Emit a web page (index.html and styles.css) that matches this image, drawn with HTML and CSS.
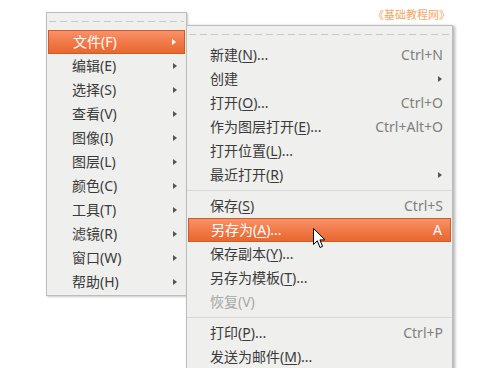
FILE: index.html
```html
<!DOCTYPE html>
<html lang="zh-CN">
<head>
<meta charset="utf-8">
<link rel="stylesheet" href="styles.css">
</head>
<body>
<div class="stage">
  <div class="watermark">《基础教程网》</div>

  <div class="menu menu-main">
    <div class="tearoff"><span class="dash"></span></div>
    <div class="item active"><span class="label">文件(F)</span><span class="arrow"></span></div>
    <div class="item"><span class="label">编辑(E)</span><span class="arrow"></span></div>
    <div class="item"><span class="label">选择(S)</span><span class="arrow"></span></div>
    <div class="item"><span class="label">查看(V)</span><span class="arrow"></span></div>
    <div class="item"><span class="label">图像(I)</span><span class="arrow"></span></div>
    <div class="item"><span class="label">图层(L)</span><span class="arrow"></span></div>
    <div class="item"><span class="label">颜色(C)</span><span class="arrow"></span></div>
    <div class="item"><span class="label">工具(T)</span><span class="arrow"></span></div>
    <div class="item"><span class="label">滤镜(R)</span><span class="arrow"></span></div>
    <div class="item"><span class="label">窗口(W)</span><span class="arrow"></span></div>
    <div class="item"><span class="label">帮助(H)</span><span class="arrow"></span></div>
  </div>

  <div class="menu menu-sub">
    <div class="tearoff"><span class="dash"></span></div>
    <div class="item"><span class="label">新建(<u>N</u>)...</span><span class="accel">Ctrl+N</span></div>
    <div class="item"><span class="label">创建</span><span class="arrow"></span></div>
    <div class="item"><span class="label">打开(<u>O</u>)...</span><span class="accel">Ctrl+O</span></div>
    <div class="item"><span class="label">作为图层打开(<u>E</u>)...</span><span class="accel">Ctrl+Alt+O</span></div>
    <div class="item"><span class="label">打开位置(<u>L</u>)...</span></div>
    <div class="item"><span class="label">最近打开(<u>R</u>)</span><span class="arrow"></span></div>
    <div class="sep"></div>
    <div class="item"><span class="label">保存(<u>S</u>)</span><span class="accel">Ctrl+S</span></div>
    <div class="item active"><span class="label">另存为(<u>A</u>)...</span><span class="accel">A</span></div>
    <div class="item"><span class="label">保存副本(<u>Y</u>)...</span></div>
    <div class="item"><span class="label">另存为模板(<u>T</u>)...</span></div>
    <div class="item disabled"><span class="label">恢复(V)</span></div>
    <div class="sep"></div>
    <div class="item"><span class="label">打印(<u>P</u>)...</span><span class="accel">Ctrl+P</span></div>
    <div class="item"><span class="label">发送为邮件(<u>M</u>)...</span></div>
  </div>

  <svg class="cursor" width="13" height="21" viewBox="0 0 13 21">
    <path d="M0.5 0.5 L0.5 16.5 L4.3 12.8 L7 19.5 L9.6 18.4 L6.9 11.9 L12 11.9 Z" fill="#fff" stroke="#000" stroke-width="1" stroke-linejoin="miter"/>
  </svg>
</div>
</body>
</html>
```

FILE: styles.css
```css
html, body {
  margin: 0;
  padding: 0;
  background: #ffffff;
}

.stage {
  position: relative;
  width: 482px;
  height: 368px;
  overflow: hidden;
  font-family: "Noto Sans", "Noto Sans CJK SC", sans-serif;
  font-size: 14px;
  color: #3a3a3a;
}

.watermark {
  position: absolute;
  left: 373px;
  top: 7px;
  font-size: 11px;
  line-height: 14px;
  color: #f6a567;
  font-family: "Noto Sans CJK SC", sans-serif;
  white-space: nowrap;
}

.menu {
  position: absolute;
  box-sizing: border-box;
  background: #efefed;
  border: 1px solid #bdbdbb;
  padding: 0 1px;
  display: flex;
  flex-direction: column;
}

.menu-main {
  left: 46px;
  top: 12px;
  width: 141px;
  height: 284px;
  box-shadow: 1px 1px 2px rgba(0, 0, 0, 0.22);
  z-index: 1;
}

.menu-sub {
  left: 186px;
  top: 25px;
  width: 267px;
  height: 360px;
  box-shadow: 2px 1px 3px rgba(0, 0, 0, 0.3);
  z-index: 2;
}

.tearoff {
  height: 17px;
  display: flex;
  flex-direction: column;
  padding-top: 8px;
  box-sizing: border-box;
}

.dash {
  display: block;
  height: 1px;
  margin: 0 1px;
  background: repeating-linear-gradient(to right, #c9c9c7 0 7px, transparent 7px 11px);
}

.item {
  height: 24px;
  line-height: 24px;
  display: flex;
  align-items: center;
  white-space: nowrap;
  box-sizing: border-box;
}

.menu-main .item {
  padding: 0 7px 0 24px;
}

.menu-sub .item {
  padding: 0 8px 0 22px;
}

.label {
  flex: 1;
}

.label u {
  text-decoration: underline;
  text-underline-offset: 2px;
  text-decoration-thickness: 1px;
}

.accel {
  color: #7f7f7f;
}

.arrow {
  width: 0;
  height: 0;
  border-top: 3px solid transparent;
  border-bottom: 3px solid transparent;
  border-left: 4px solid #555;
  margin-right: 1px;
}

.item.active {
  background: linear-gradient(to bottom, #f7936a 0%, #f27c4c 45%, #e8672f 100%);
  border: 1px solid #cf5a2a;
  color: #ffffff;
}

.item.active .accel {
  color: #ffffff;
}

.item.active .arrow {
  border-left-color: #ffffff;
}

.item.disabled {
  color: #a9a9a7;
}

.sep {
  height: 7px;
  display: flex;
  align-items: center;
}

.sep::before {
  content: "";
  display: block;
  flex: 1;
  height: 1px;
  background: #d9d9d7;
  margin: 0 -1px;
}

.cursor {
  position: absolute;
  left: 313px;
  top: 228px;
  z-index: 5;
}
```
